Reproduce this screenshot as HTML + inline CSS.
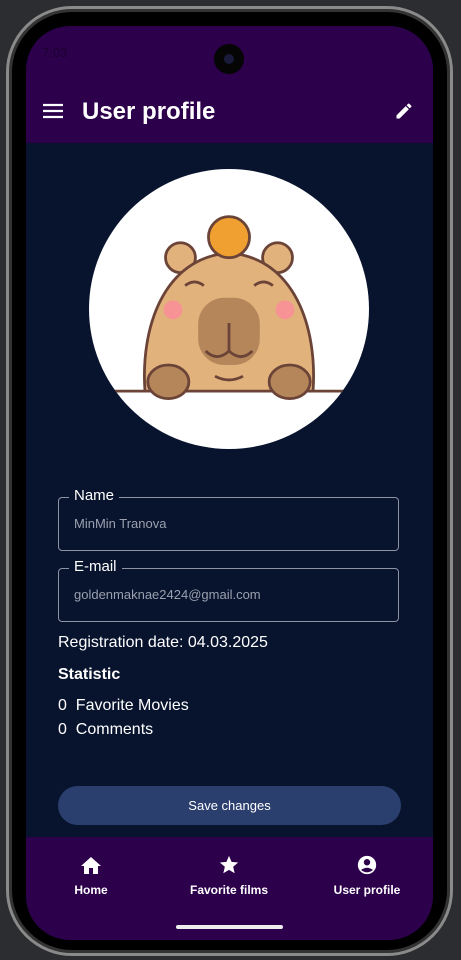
<!DOCTYPE html>
<html><head><style>
body{margin:0;width:461px;height:960px;background:#2b2d30;position:relative;overflow:hidden;font-family:"Liberation Sans",sans-serif;}
.frame{position:absolute;left:6px;top:6px;width:447px;height:950px;border-radius:66px;background:#000;border:3px solid #8a8a8a;box-sizing:border-box;box-shadow:inset 0 0 0 3px #333;}
.screen{position:absolute;left:26px;top:26px;width:407px;height:914px;border-radius:44px;overflow:hidden;background:#08132e;}
.top{position:absolute;left:0;top:0;width:100%;height:117px;background:#2c004b;}
.cam{position:absolute;left:188px;top:18px;width:30px;height:30px;border-radius:50%;background:#050505;}
.cam:after{content:"";position:absolute;left:10px;top:10px;width:10px;height:10px;border-radius:50%;background:#1a1a3a;}
.title{position:absolute;left:56px;top:72px;color:#fff;font-weight:bold;font-size:24px;}
.nav{position:absolute;left:0;top:811px;width:100%;height:103px;background:#2c004b;}
.field{position:absolute;left:32px;width:341px;height:54px;border:1px solid #8d93a3;border-radius:4px;box-sizing:border-box;}
.field .lb{position:absolute;left:10px;top:-11px;background:#08132e;color:#fff;font-size:15px;padding:0 5px;}
.field .v{position:absolute;left:15px;top:18px;color:#9aa0ad;font-size:13px;}
.t{position:absolute;left:32px;color:#fff;font-size:16px;}
.btn{position:absolute;left:32px;top:760px;width:343px;height:39px;border-radius:20px;background:#2b3f6e;color:#fff;font-size:13px;text-align:center;line-height:39px;}
.ni{position:absolute;top:17px;width:120px;text-align:center;color:#fff;font-size:12px;font-weight:bold;}
.ni span{display:block;margin-top:4px;}
</style></head><body>
<div class="frame"></div>
<div class="screen">
<div class="top">
<div style="position:absolute;left:16px;top:19px;color:#1a0030;font-size:13px">7:03</div>
<div class="cam"></div>
<svg style="position:absolute;left:17px;top:77px" width="20" height="16"><path d="M0 2h20M0 8h20M0 14h20" stroke="#fff" stroke-width="2.2"/></svg>
<div class="title">User profile</div>
<svg style="position:absolute;left:368px;top:75px" width="20" height="20" viewBox="0 0 24 24"><path fill="#fff" d="M3 17.25V21h3.75L17.81 9.94l-3.75-3.75L3 17.25zM20.71 7.04a1 1 0 000-1.41l-2.34-2.34a1 1 0 00-1.41 0l-1.83 1.83 3.75 3.75 1.83-1.83z"/></svg>
</div>
<svg style="position:absolute;left:63px;top:143px" width="280" height="280" viewBox="0 0 300 300">
<defs><clipPath id="c"><circle cx="150" cy="150" r="150"/></clipPath></defs>
<circle cx="150" cy="150" r="150" fill="#fff"/>
<g clip-path="url(#c)" stroke="#6b4337" stroke-width="3">
<path d="M0 238H300" />
<circle cx="98" cy="95" r="16" fill="#e2b27d"/><circle cx="202" cy="95" r="16" fill="#e2b27d"/>
<path d="M60 238C55 170 80 95 150 90C220 95 245 170 240 238Z" fill="#e2b27d"/>
<rect x="117" y="138" width="66" height="72" rx="28" fill="#b5865a" stroke="none"/>
<path d="M125 195q12 12 25 0q13 12 25 0M150 165v30M135 222q15 8 30 0M103 125q10-8 20 0M177 125q10-8 20 0" fill="none"/>
<circle cx="150" cy="73" r="22" fill="#f0a030"/>
<ellipse cx="85" cy="228" rx="22" ry="18" fill="#b5865a"/><ellipse cx="215" cy="228" rx="22" ry="18" fill="#b5865a"/>
</g>
<circle cx="90" cy="151" r="10" fill="#f79295"/><circle cx="210" cy="151" r="10" fill="#f79295"/>
</svg>
<div class="field" style="top:471px"><div class="lb">Name</div><div class="v">MinMin Tranova</div></div>
<div class="field" style="top:542px"><div class="lb">E-mail</div><div class="v">goldenmaknae2424@gmail.com</div></div>
<div class="t" style="top:608px">Registration date: 04.03.2025</div>
<div class="t" style="top:640px;font-weight:bold">Statistic</div>
<div class="t" style="top:671px">0&nbsp; Favorite Movies</div>
<div class="t" style="top:695px">0&nbsp; Comments</div>
<div class="btn">Save changes</div>
<div class="nav">
<div class="ni" style="left:5px"><svg width="24" height="22" viewBox="0 0 24 22"><path fill="#fff" d="M10 20v-6h4v6h5v-8h3L12 3 2 12h3v8z"/></svg><span>Home</span></div>
<div class="ni" style="left:143px"><svg width="24" height="22" viewBox="0 0 24 24"><path fill="#fff" d="M12 17.27L18.18 21l-1.64-7.03L22 9.24l-7.19-.61L12 2 9.19 8.63 2 9.24l5.46 4.73L5.82 21z"/></svg><span>Favorite films</span></div>
<div class="ni" style="left:281px"><svg width="24" height="22" viewBox="0 0 24 24"><circle cx="12" cy="12" r="10" fill="#fff"/><circle cx="12" cy="9" r="3.5" fill="#2c004b"/><path d="M5.5 17.5q6.5-5 13 0q-6.5 5-13 0z" fill="#2c004b"/></svg><span>User profile</span></div>
<div style="position:absolute;left:150px;top:88px;width:107px;height:4px;border-radius:2px;background:#eee"></div>
</div>
</div>
</body></html>
